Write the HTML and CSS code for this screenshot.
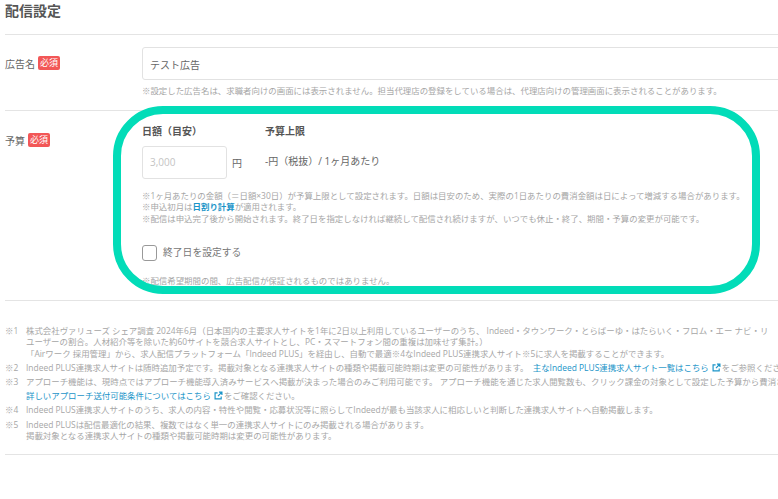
FILE: index.html
```html
<!DOCTYPE html>
<html lang="ja">
<head>
<meta charset="utf-8">
<title>配信設定</title>
<link rel="stylesheet" href="styles.css">
</head>
<body>
<main class="page">
  <h1 class="title">配信設定</h1>
  <section class="row row-name">
    <div class="label"><span>広告名</span><span class="badge">必須</span></div>
    <div class="field">
      <div class="text-input">テスト広告</div>
      <p class="note note-name">※設定した広告名は、求職者向けの画面には表示されません。担当代理店の登録をしている場合は、代理店向けの管理画面に表示されることがあります。</p>
    </div>
  </section>
  <section class="row row-budget">
    <div class="label label-budget"><span>予算</span><span class="badge">必須</span></div>
    <div class="field">
      <div class="budget-grid">
        <div class="budget-col">
          <div class="budget-head">日額（目安）</div>
          <div class="amount"><div class="amount-input">3,000</div><span class="unit">円</span></div>
        </div>
        <div class="budget-col">
          <div class="budget-head">予算上限</div>
          <div class="limit">-円（税抜）/ 1ヶ月あたり</div>
        </div>
      </div>
      <div class="note budget-notes">
        <p>※1ヶ月あたりの金額（＝日額×30日）が予算上限として設定されます。日額は目安のため、実際の1日あたりの費消金額は日によって増減する場合があります。</p>
        <p>※申込初月は<a class="link-strong">日割り計算</a>が適用されます。</p>
        <p>※配信は申込完了後から開始されます。終了日を指定しなければ継続して配信され続けますが、いつでも休止・終了、期間・予算の変更が可能です。</p>
      </div>
      <div class="check-row"><span class="checkbox"></span><span>終了日を設定する</span></div>
      <p class="note note-end">※配信希望期間の間、広告配信が保証されるものではありません。</p>
    </div>
  </section>
  <section class="footnotes">
    <div class="fn"><span class="mark">※1</span><div class="fn-body">
      <p>株式会社ヴァリューズ シェア調査 2024年6月（日本国内の主要求人サイトを1年に2日以上利用しているユーザーのうち、 Indeed・タウンワーク・とらばーゆ・はたらいく・フロム・エー ナビ・リ</p>
      <p>ユーザーの割合。人材紹介等を除いた約60サイトを競合求人サイトとし、PC・スマートフォン間の重複は加味せず集計。）</p>
      <p>「Airワーク 採用管理」から、求人配信プラットフォーム「Indeed PLUS」を経由し、自動で最適※4なIndeed PLUS連携求人サイト※5に求人を掲載することができます。</p>
    </div></div>
    <div class="fn"><span class="mark">※2</span><div class="fn-body">
      <p>Indeed PLUS連携求人サイトは随時追加予定です。掲載対象となる連携求人サイトの種類や掲載可能時期は変更の可能性があります。 <a class="link link-gap">主なIndeed PLUS連携求人サイト一覧はこちら<svg class="ext" viewBox="0 0 10 10"><path d="M4 2H1.2v6.8H8V6M5.5 1.2h3.3v3.3M8.6 1.4 4.4 5.6" fill="none" stroke="#1a94c8" stroke-width="1.3"/></svg></a>をご参照ください。</p>
    </div></div>
    <div class="fn"><span class="mark">※3</span><div class="fn-body">
      <p>アプローチ機能は、現時点ではアプローチ機能導入済みサービスへ掲載が決まった場合のみご利用可能です。 アプローチ機能を通じた求人閲覧数も、クリック課金の対象として設定した予算から費消されます。</p>
      <p class="fn-linkline"><a class="link">詳しいアプローチ送付可能条件についてはこちら<svg class="ext" viewBox="0 0 10 10"><path d="M4 2H1.2v6.8H8V6M5.5 1.2h3.3v3.3M8.6 1.4 4.4 5.6" fill="none" stroke="#1a94c8" stroke-width="1.3"/></svg></a>をご確認ください。</p>
    </div></div>
    <div class="fn"><span class="mark">※4</span><div class="fn-body">
      <p>Indeed PLUS連携求人サイトのうち、求人の内容・特性や閲覧・応募状況等に照らしてIndeedが最も当該求人に相応しいと判断した連携求人サイトへ自動掲載します。</p>
    </div></div>
    <div class="fn"><span class="mark">※5</span><div class="fn-body">
      <p>Indeed PLUSは配信最適化の結果、複数ではなく単一の連携求人サイトにのみ掲載される場合があります。</p>
      <p>掲載対象となる連携求人サイトの種類や掲載可能時期は変更の可能性があります。</p>
    </div></div>
  </section>
  <div class="highlight"></div>
</main>
</body>
</html>
```
FILE: styles.css
```css
* { box-sizing: border-box; }
html, body { margin: 0; height: 499px; overflow: hidden; background: #fff; }
body { font-family: "Open Sans", "Noto Sans CJK JP", sans-serif; color: #666; }
p { margin: 0; }
.page { position: relative; width: 778px; height: 499px; padding-left: 5px; overflow: hidden; }
.title { margin: 0 -5px 0 0; height: 35px; padding-top: 1px; font-size: 14px; line-height: 20px; font-weight: 700; color: #555; border-bottom: 1px solid #e4e4e4; }
.row { display: flex; border-bottom: 1px solid #e4e4e4; white-space: nowrap; }
.row-name { height: 76px; padding-top: 12px; }
.row-budget { height: 190px; padding-top: 13px; }
.label { width: 137px; flex: none; display: flex; align-items: center; gap: 3px; height: 32px; font-size: 10px; color: #666; }
.label-budget { height: 34px; padding-bottom: 2px; }
.badge { display: inline-block; width: 22px; height: 14px; border-radius: 2px; background: #f25757; color: #fff; font-size: 9px; line-height: 14px; text-align: center; }
.field { flex: 1; min-width: 0; }
.text-input { width: 660px; height: 33px; border: 1px solid #e2e2e2; border-radius: 3px; padding-left: 7px; font-size: 10px; line-height: 33px; color: #666; }
.note { font-size: 8.44px; line-height: 11.3px; color: #a6a6a6; }
.note-name { margin-top: 5px; }
.budget-grid { display: flex; }
.budget-col:first-child { width: 123px; }
.budget-head { font-size: 10px; line-height: 14px; font-weight: 700; color: #555; }
.amount { display: flex; align-items: center; gap: 5px; margin-top: 8px; }
.amount-input { width: 85px; height: 33px; border: 1px solid #e2e2e2; border-radius: 3px; padding-left: 7px; font-size: 10px; line-height: 31px; color: #c4c4c4; }
.unit { font-size: 10px; color: #666; }
.limit { margin-top: 7px; font-size: 10px; line-height: 33px; color: #666; }
.budget-notes { margin-top: 11px; }
.link-strong { color: #1a94c8; font-weight: 700; }
.link { color: #1a94c8; }
.link-gap { margin-left: 2px; }
.check-row { display: flex; align-items: center; gap: 6px; margin-top: 21px; font-size: 9.8px; line-height: 16px; color: #777; }
.checkbox { width: 15px; height: 16px; border: 1px solid #999; border-radius: 3px; }
.note-end { margin-top: 14px; }
.footnotes { padding-top: 24px; white-space: nowrap; font-size: 8.44px; line-height: 11.3px; color: #a6a6a6; height: 154px; border-bottom: 1px solid #e4e4e4; }
.fn { display: flex; margin-bottom: 3.1px; }
.fn-linkline { margin-top: 2.2px; }
.mark { width: 21px; flex: none; }
.fn-body { min-width: 0; }
.ext { width: 9px; height: 9px; margin: 0 1px 0 3px; vertical-align: -1.5px; }
.highlight { position: absolute; left: 113px; top: 106px; width: 647px; height: 188px; border: 8px solid #02dcb8; border-radius: 50px; pointer-events: none; }
.text-input { padding-top: 1px; }
```
